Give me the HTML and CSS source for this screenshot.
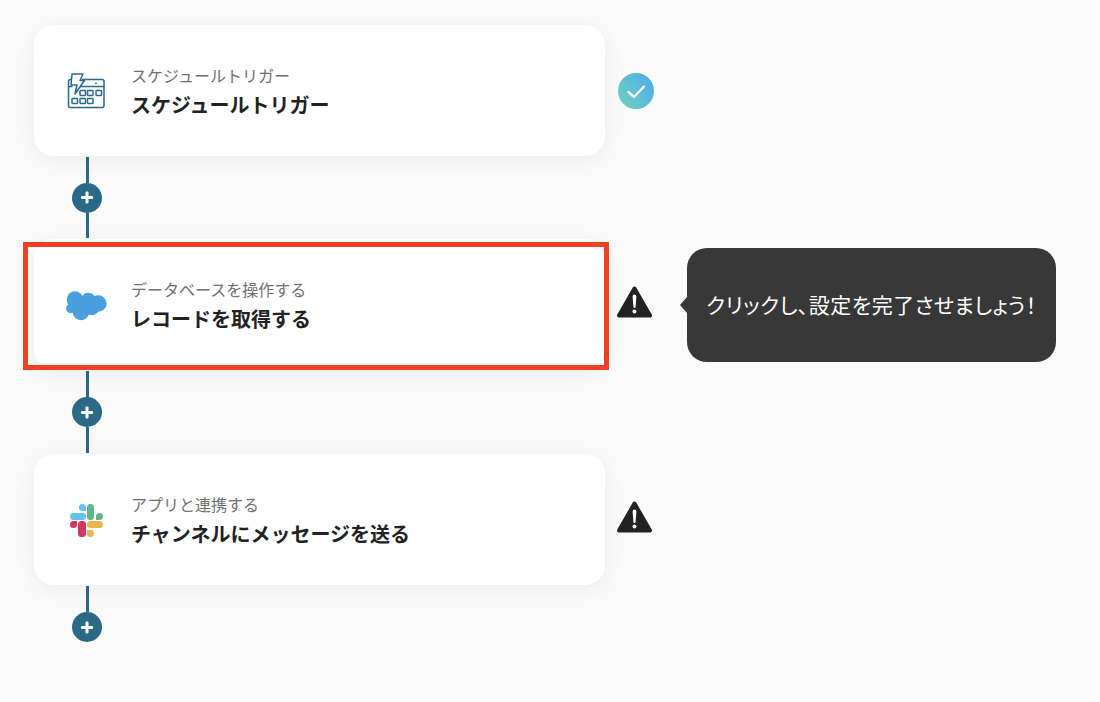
FILE: index.html
```html
<!DOCTYPE html>
<html lang="ja">

<head>
	<meta charset="utf-8">
	<title>フロー</title>
	<link rel="stylesheet" href="styles.css">
</head>

<body>
	<div class="flow">
		<div class="step">
			<div class="card">
				<svg class="app-icon" viewBox="0 0 40 40" fill="none" stroke="#2b6a86" stroke-width="1.5" stroke-linejoin="round">
					<path d="M7.500 8.500H3.500a2 2 0 0 0-2 2v24a2 2 0 0 0 2 2h31.500a2 2 0 0 0 2-2v-24a2 2 0 0 0-2-2H15" />
					<path d="M1.500 15.500h4M11 15.500h26" />
					<path d="M5 3h11l-3 6.500h4.500L8 23l2-9H4z" fill="#fff" />
					<circle cx="29" cy="12.300" r="0.600" fill="#2b6a86" stroke-width="0.800" />
					<rect x="13" y="19.500" width="5.500" height="5" rx="0.700" />
					<rect x="20.500" y="19.500" width="5.500" height="5" rx="0.700" />
					<rect x="29" y="19.500" width="5.500" height="5" rx="0.700" />
					<rect x="5" y="27.500" width="5.500" height="5" rx="0.700" />
					<rect x="13" y="27.500" width="5.500" height="5" rx="0.700" />
					<rect x="20.500" y="27.500" width="5.500" height="5" rx="0.700" />
				</svg>
				<div class="card-text">
					<div class="card-sub">スケジュールトリガー</div>
					<div class="card-title">スケジュールトリガー</div>
				</div>
			</div>
			<svg class="status status-ok" viewBox="0 0 36 36">
				<defs>
					<linearGradient id="okGrad" x1="0" y1="1" x2="1" y2="0.300">
						<stop offset="0" stop-color="#6dd3bd" />
						<stop offset="1" stop-color="#52aee8" />
					</linearGradient>
				</defs>
				<circle cx="18" cy="18" r="18" fill="url(#okGrad)" />
				<path d="M10.500 19l5.500 5 10-10.500" fill="none" stroke="#fff" stroke-width="2.400" stroke-linecap="round" stroke-linejoin="round" />
			</svg>
		</div>

		<div class="link">
			<span class="link-line"></span>
			<span class="plus"></span>
			<span class="link-line"></span>
		</div>

		<div class="step step-active">
			<div class="card">
				<svg class="app-icon" viewBox="0 0 40 40">
					<g fill="#4aa0de">
						<circle cx="8" cy="14.500" r="8.300" />
						<circle cx="21.300" cy="15" r="7.300" />
						<circle cx="31.300" cy="18.500" r="8.300" />
						<circle cx="3.700" cy="23.500" r="4.700" />
						<circle cx="14" cy="27" r="8.300" />
						<circle cx="24.700" cy="22" r="8.300" />
						<rect x="8" y="14" width="22" height="10" />
					</g>
				</svg>
				<div class="card-text">
					<div class="card-sub">データベースを操作する</div>
					<div class="card-title">レコードを取得する</div>
				</div>
			</div>
			<svg class="status-warn" viewBox="0 0 35 32">
				<path d="M17.500 2.500L33 29.500H2z" fill="#222" stroke="#222" stroke-width="4" stroke-linejoin="round" />
				<path d="M15.600 10.500a1.900 1.900 0 0 1 3.800 0l-.8 10.500a1.100 1.100 0 0 1-2.200 0z" fill="#fff" />
				<circle cx="17.500" cy="25.500" r="2" fill="#fff" />
			</svg>
			<div class="hilite"></div>
			<div class="tip">クリックし、設定を完了させましょう！</div>
		</div>

		<div class="link link-long">
			<span class="link-line"></span>
			<span class="plus"></span>
			<span class="link-line"></span>
		</div>

		<div class="step">
			<div class="card">
				<svg class="app-icon" viewBox="0 0 40 40">
					<g fill="#62c3ea">
						<rect x="3" y="13" width="16" height="7" rx="3.500" />
						<path d="M12 7.500a3.500 3.500 0 0 1 7 0V11h-3.500A3.500 3.500 0 0 1 12 7.500z" />
					</g>
					<g fill="#5db58a">
						<rect x="20" y="4" width="7" height="16" rx="3.500" />
						<path d="M29 16.500a3.500 3.500 0 1 1 3.500 3.500H29z" />
					</g>
					<g fill="#d4365f">
						<rect x="11" y="21" width="8" height="16" rx="3.500" />
						<path d="M10 24.500a3.500 3.500 0 1 1-3.500-3.500H10z" />
					</g>
					<g fill="#e8b64c">
						<rect x="20" y="21" width="16" height="7" rx="3.500" />
						<path d="M20 30h3.500a3.500 3.500 0 1 1-3.500 3.500z" />
					</g>
				</svg>
				<div class="card-text">
					<div class="card-sub">アプリと連携する</div>
					<div class="card-title">チャンネルにメッセージを送る</div>
				</div>
			</div>
			<svg class="status-warn" viewBox="0 0 35 32">
				<path d="M17.500 2.500L33 29.500H2z" fill="#222" stroke="#222" stroke-width="4" stroke-linejoin="round" />
				<path d="M15.600 10.500a1.900 1.900 0 0 1 3.800 0l-.8 10.500a1.100 1.100 0 0 1-2.200 0z" fill="#fff" />
				<circle cx="17.500" cy="25.500" r="2" fill="#fff" />
			</svg>
		</div>

		<div class="link link-end">
			<span class="link-line"></span>
			<span class="plus"></span>
		</div>
	</div>
</body>

</html>
```

FILE: styles.css
```css
* {
	box-sizing: border-box;
}

html,
body {
	margin: 0;
	padding: 0;
	height: 100%;
	overflow: hidden;
}

body {
	background: #fafafa;
	font-family: "Noto Sans CJK JP", "Noto Sans", sans-serif;
	color: #222;
}

.flow {
	padding: 25px 0 0 34px;
}

.step {
	position: relative;
	display: flex;
	align-items: center;
	gap: 12px;
}

.card {
	width: 571px;
	height: 131px;
	display: flex;
	align-items: center;
	gap: 24px;
	padding-left: 33px;
	background: #fff;
	border-radius: 20px;
	box-shadow: 0 4px 24px rgba(0, 0, 0, 0.06);
}

.app-icon {
	width: 40px;
	height: 40px;
	flex: none;
	overflow: visible;
}

.card-text {
	display: flex;
	flex-direction: column;
	gap: 5px;
	margin-top: 1px;
}

.card-sub {
	font-size: 16px;
	line-height: 22px;
	color: #6f6f6f;
}

.card-title {
	font-size: 20px;
	line-height: 28px;
	font-weight: 700;
	color: #222;
}

.status {
	width: 36px;
	height: 36px;
	flex: none;
}

.status-ok {
	margin-left: 1px;
}

.status-warn {
	width: 35px;
	height: 32px;
	flex: none;
	margin-bottom: 5px;
}

.link {
	width: 30px;
	margin-left: 38px;
	height: 83px;
	display: flex;
	flex-direction: column;
	align-items: center;
}

.link-long {
	height: 84px;
}

.link-line {
	flex: 1;
	width: 3px;
	margin: 1px 0;
	background: #2b6a86;
}

.plus {
	position: relative;
	width: 30px;
	height: 30px;
	flex: none;
	margin: -1px 0;
	border-radius: 50%;
	background: #2b6a86;
}

.plus::before,
.plus::after {
	content: "";
	position: absolute;
	left: 9px;
	top: 13.500px;
	width: 12px;
	height: 3px;
	border-radius: 1px;
	background: #fff;
}

.plus::after {
	transform: rotate(90deg);
}

.link-end {
	height: 57px;
}

.link-end .link-line {
	flex: none;
	height: 26px;
}

.hilite {
	position: absolute;
	left: -11px;
	top: 3px;
	width: 586px;
	height: 128px;
	border: 5px solid #ef4123;
	pointer-events: none;
}

.tip {
	position: absolute;
	left: 653px;
	top: 9px;
	width: 369px;
	height: 114px;
	display: flex;
	align-items: center;
	justify-content: center;
	padding-bottom: 2px;
	background: #383838;
	border-radius: 20px;
	color: #fff;
	font-size: 21px;
	letter-spacing: 0.500px;
	font-feature-settings: "palt";
	white-space: nowrap;
}

.tip::before {
	content: "";
	position: absolute;
	left: -7px;
	top: 49px;
	border-style: solid;
	border-width: 8px 7px 8px 0;
	border-color: transparent #383838 transparent transparent;
}
```
